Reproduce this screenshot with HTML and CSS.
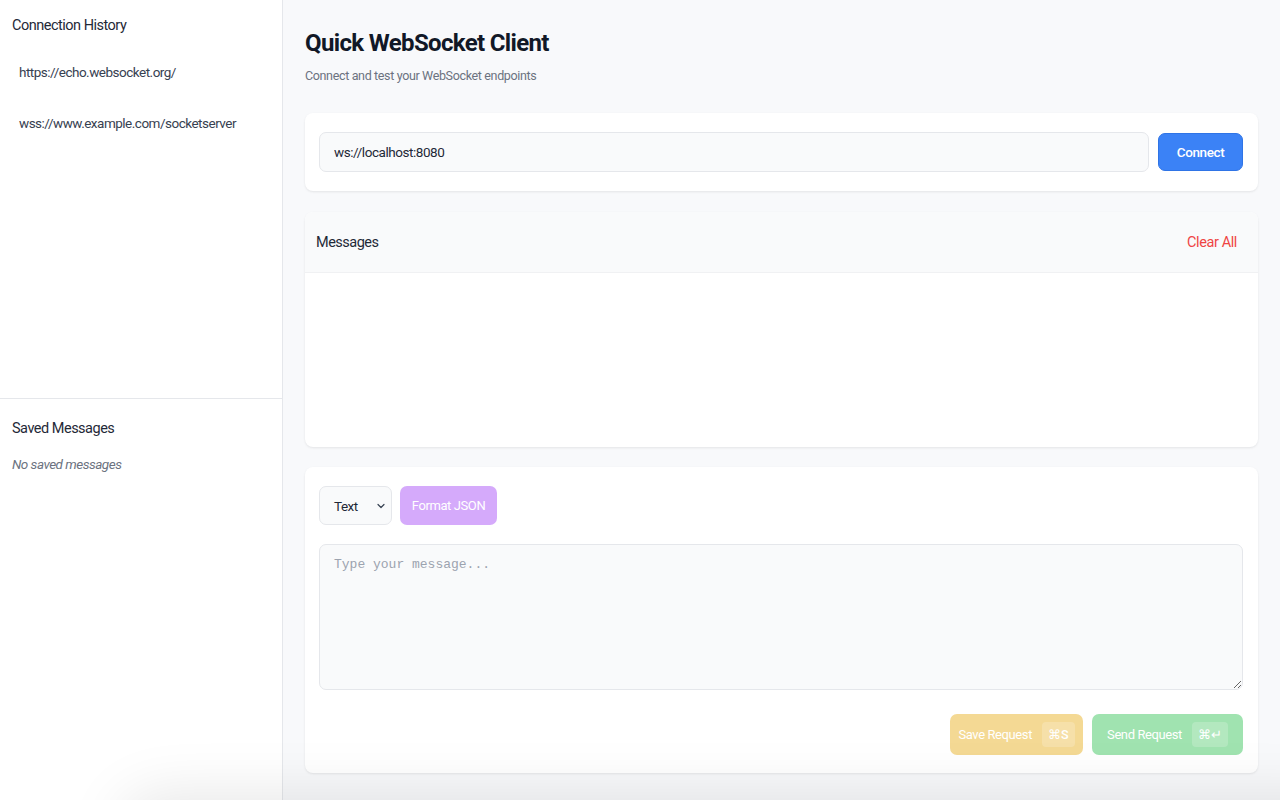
FILE: index.html
```html
<!DOCTYPE html>
<html lang="en">
<head>
<meta charset="utf-8">
<title>Quick WebSocket Client</title>
<link rel="stylesheet" href="styles.css">
</head>
<body>
<div class="app">
  <aside class="sidebar">
    <section class="side-section history">
      <h2 class="side-title">Connection History</h2>
      <ul class="history-list">
        <li class="history-item">https://echo.websocket.org/</li>
        <li class="history-item">wss://www.example.com/socketserver</li>
      </ul>
    </section>
    <section class="side-section saved">
      <h2 class="side-title">Saved Messages</h2>
      <p class="empty">No saved messages</p>
    </section>
  </aside>
  <main class="main">
    <header class="page-header">
      <h1 class="page-title">Quick WebSocket Client</h1>
      <p class="page-sub">Connect and test your WebSocket endpoints</p>
    </header>

    <div class="card connect-card">
      <input class="url-input" type="text" value="ws://localhost:8080">
      <button class="btn btn-blue">Connect</button>
    </div>

    <div class="card messages-card">
      <div class="messages-head">
        <span class="messages-title">Messages</span>
        <button class="clear-btn">Clear All</button>
      </div>
      <div class="messages-body"></div>
    </div>

    <div class="card compose-card">
      <div class="compose-tools">
        <div class="select-wrap">
          <span class="select-text">Text</span>
          <svg class="chev" width="10" height="10" viewBox="0 0 10 10"><path d="M2 3.5 L5 6.5 L8 3.5" fill="none" stroke="#374151" stroke-width="1.2" stroke-linecap="round" stroke-linejoin="round"/></svg>
        </div>
        <button class="btn btn-purple">Format JSON</button>
      </div>
      <textarea class="msg-input" placeholder="Type your message..."></textarea>
      <div class="compose-actions">
        <button class="btn btn-yellow">Save Request <span class="kbd">⌘S</span></button>
        <button class="btn btn-green">Send Request <span class="kbd">⌘↵</span></button>
      </div>
    </div>
  </main>
</div>
<div class="window-shadow"></div>
</body>
</html>
```

FILE: styles.css
```css
* { box-sizing: border-box; }
html, body { margin: 0; padding: 0; height: 100%; }
body {
  font-family: Roboto, "Noto Sans", sans-serif;
  color: #111827;
  background: #f8f9fb;
  overflow: hidden;
  letter-spacing: -0.5px;
}
.app { display: flex; height: 800px; }

.sidebar {
  width: 283px;
  flex: none;
  background: #fff;
  border-right: 1px solid #e5e7eb;
  display: flex;
  flex-direction: column;
}
.side-section.history {
  height: 399px;
  border-bottom: 1px solid #e5e7eb;
  padding: 16px 12px;
}
.side-section.saved { padding: 20px 12px; }
.side-title {
  margin: 0;
  font-size: 14.5px;
  font-weight: 400;
  color: #1f2937;
  line-height: 20px;
}
.history-list { list-style: none; margin: 26px 0 0; padding: 0; }
.history-item {
  font-size: 13.5px;
  color: #374151;
  padding: 0 7px;
  height: 51px;
  line-height: 20px;
}
.empty {
  margin: 17px 0 0;
  font-size: 13.5px;
  font-style: italic;
  color: #6b7280;
}

.main {
  flex: 1;
  padding: 29px 22px 0 22px;
  display: flex;
  flex-direction: column;
}
.page-header { margin-bottom: 29px; }
.page-title {
  margin: 0;
  font-size: 24px;
  font-weight: 700;
  line-height: 28px;
  color: #111827;
  letter-spacing: -0.65px;
}
.page-sub {
  margin: 11px 0 0;
  font-size: 12.5px;
  color: #6b7280;
  line-height: 16px;
  letter-spacing: -0.35px;
}

.card {
  background: #fff;
  border-radius: 8px;
  box-shadow: 0 1px 3px rgba(0,0,0,0.06), 0 1px 2px rgba(0,0,0,0.03);
}
.connect-card {
  display: flex;
  align-items: center;
  gap: 9px;
  padding: 19px 15px 19px 14px;
  height: 78px;
  margin-bottom: 21px;
}
.url-input {
  flex: 1;
  height: 40px;
  border: 1px solid #e5e7eb;
  border-radius: 7px;
  background: #f9fafb;
  padding: 0 14px;
  font-family: inherit;
  font-size: 13.5px;
  letter-spacing: -0.45px;
  color: #1f2937;
  outline: none;
}
.btn {
  border: none;
  font-family: inherit;
  letter-spacing: -0.4px;
  color: #fff;
  border-radius: 7px;
  cursor: pointer;
  display: inline-flex;
  align-items: center;
  justify-content: center;
  font-size: 13.5px;
  font-weight: 400;
}
.btn-blue {
  background: #3b82f6;
  width: 85px;
  height: 38px;
  border: 1px solid #2f74e6;
  font-weight: 500;
}

.messages-card {
  height: 235px;
  margin-bottom: 20px;
  overflow: hidden;
  display: flex;
  flex-direction: column;
}
.messages-head {
  height: 61px;
  background: #f9fafb;
  border-bottom: 1px solid #f0f1f3;
  display: flex;
  align-items: center;
  justify-content: space-between;
  padding: 0 21px 0 11px;
}
.messages-title { font-size: 14.5px; color: #1f2937; }
.clear-btn {
  background: none;
  border: none;
  color: #ef4444;
  font-family: inherit;
  letter-spacing: -0.4px;
  font-size: 14.5px;
  padding: 0;
}
.messages-body { flex: 1; }

.compose-card {
  height: 306px;
  padding: 19px 15px 18px 14px;
  display: flex;
  flex-direction: column;
}
.compose-tools { display: flex; gap: 8px; align-items: center; }
.select-wrap {
  width: 73px;
  height: 39px;
  border: 1px solid #e5e7eb;
  border-radius: 7px;
  background: #f9fafb;
  display: flex;
  align-items: center;
  justify-content: space-between;
  padding: 0 5px 0 14px;
  font-size: 13.5px;
  color: #1f2937;
}
.btn-purple {
  background: #d5aafb;
  width: 97px;
  height: 39px;
  font-size: 13px;
}
.msg-input {
  margin-top: 19px;
  height: 146px;
  resize: vertical;
  border: 1px solid #e5e7eb;
  border-radius: 7px;
  background: #f9fafb;
  padding: 12px 14px;
  font-family: "Liberation Mono", "DejaVu Sans Mono", monospace;
  letter-spacing: 0;
  font-size: 13px;
  color: #1f2937;
  outline: none;
}
.msg-input::placeholder { color: #9ca3af; }
.compose-actions {
  margin-top: 24px;
  display: flex;
  justify-content: flex-end;
  gap: 9px;
}
.btn-yellow { background: #f4d994; width: 133px; height: 41px; gap: 10px; font-size: 13px; }
.btn-green { background: #a0e3b0; width: 151px; height: 41px; gap: 10px; font-size: 13px; }
.kbd {
  background: rgba(255,255,255,0.2);
  border-radius: 4px;
  padding: 5px 6px;
  font-size: 12.5px;
  font-weight: 500;
  letter-spacing: 0;
}

.window-shadow {
  position: fixed;
  left: 140px;
  right: -60px;
  top: 815px;
  height: 40px;
  pointer-events: none;
  border-radius: 40px;
  box-shadow: 0 0 60px 20px rgba(0,0,0,0.10);
}
```
